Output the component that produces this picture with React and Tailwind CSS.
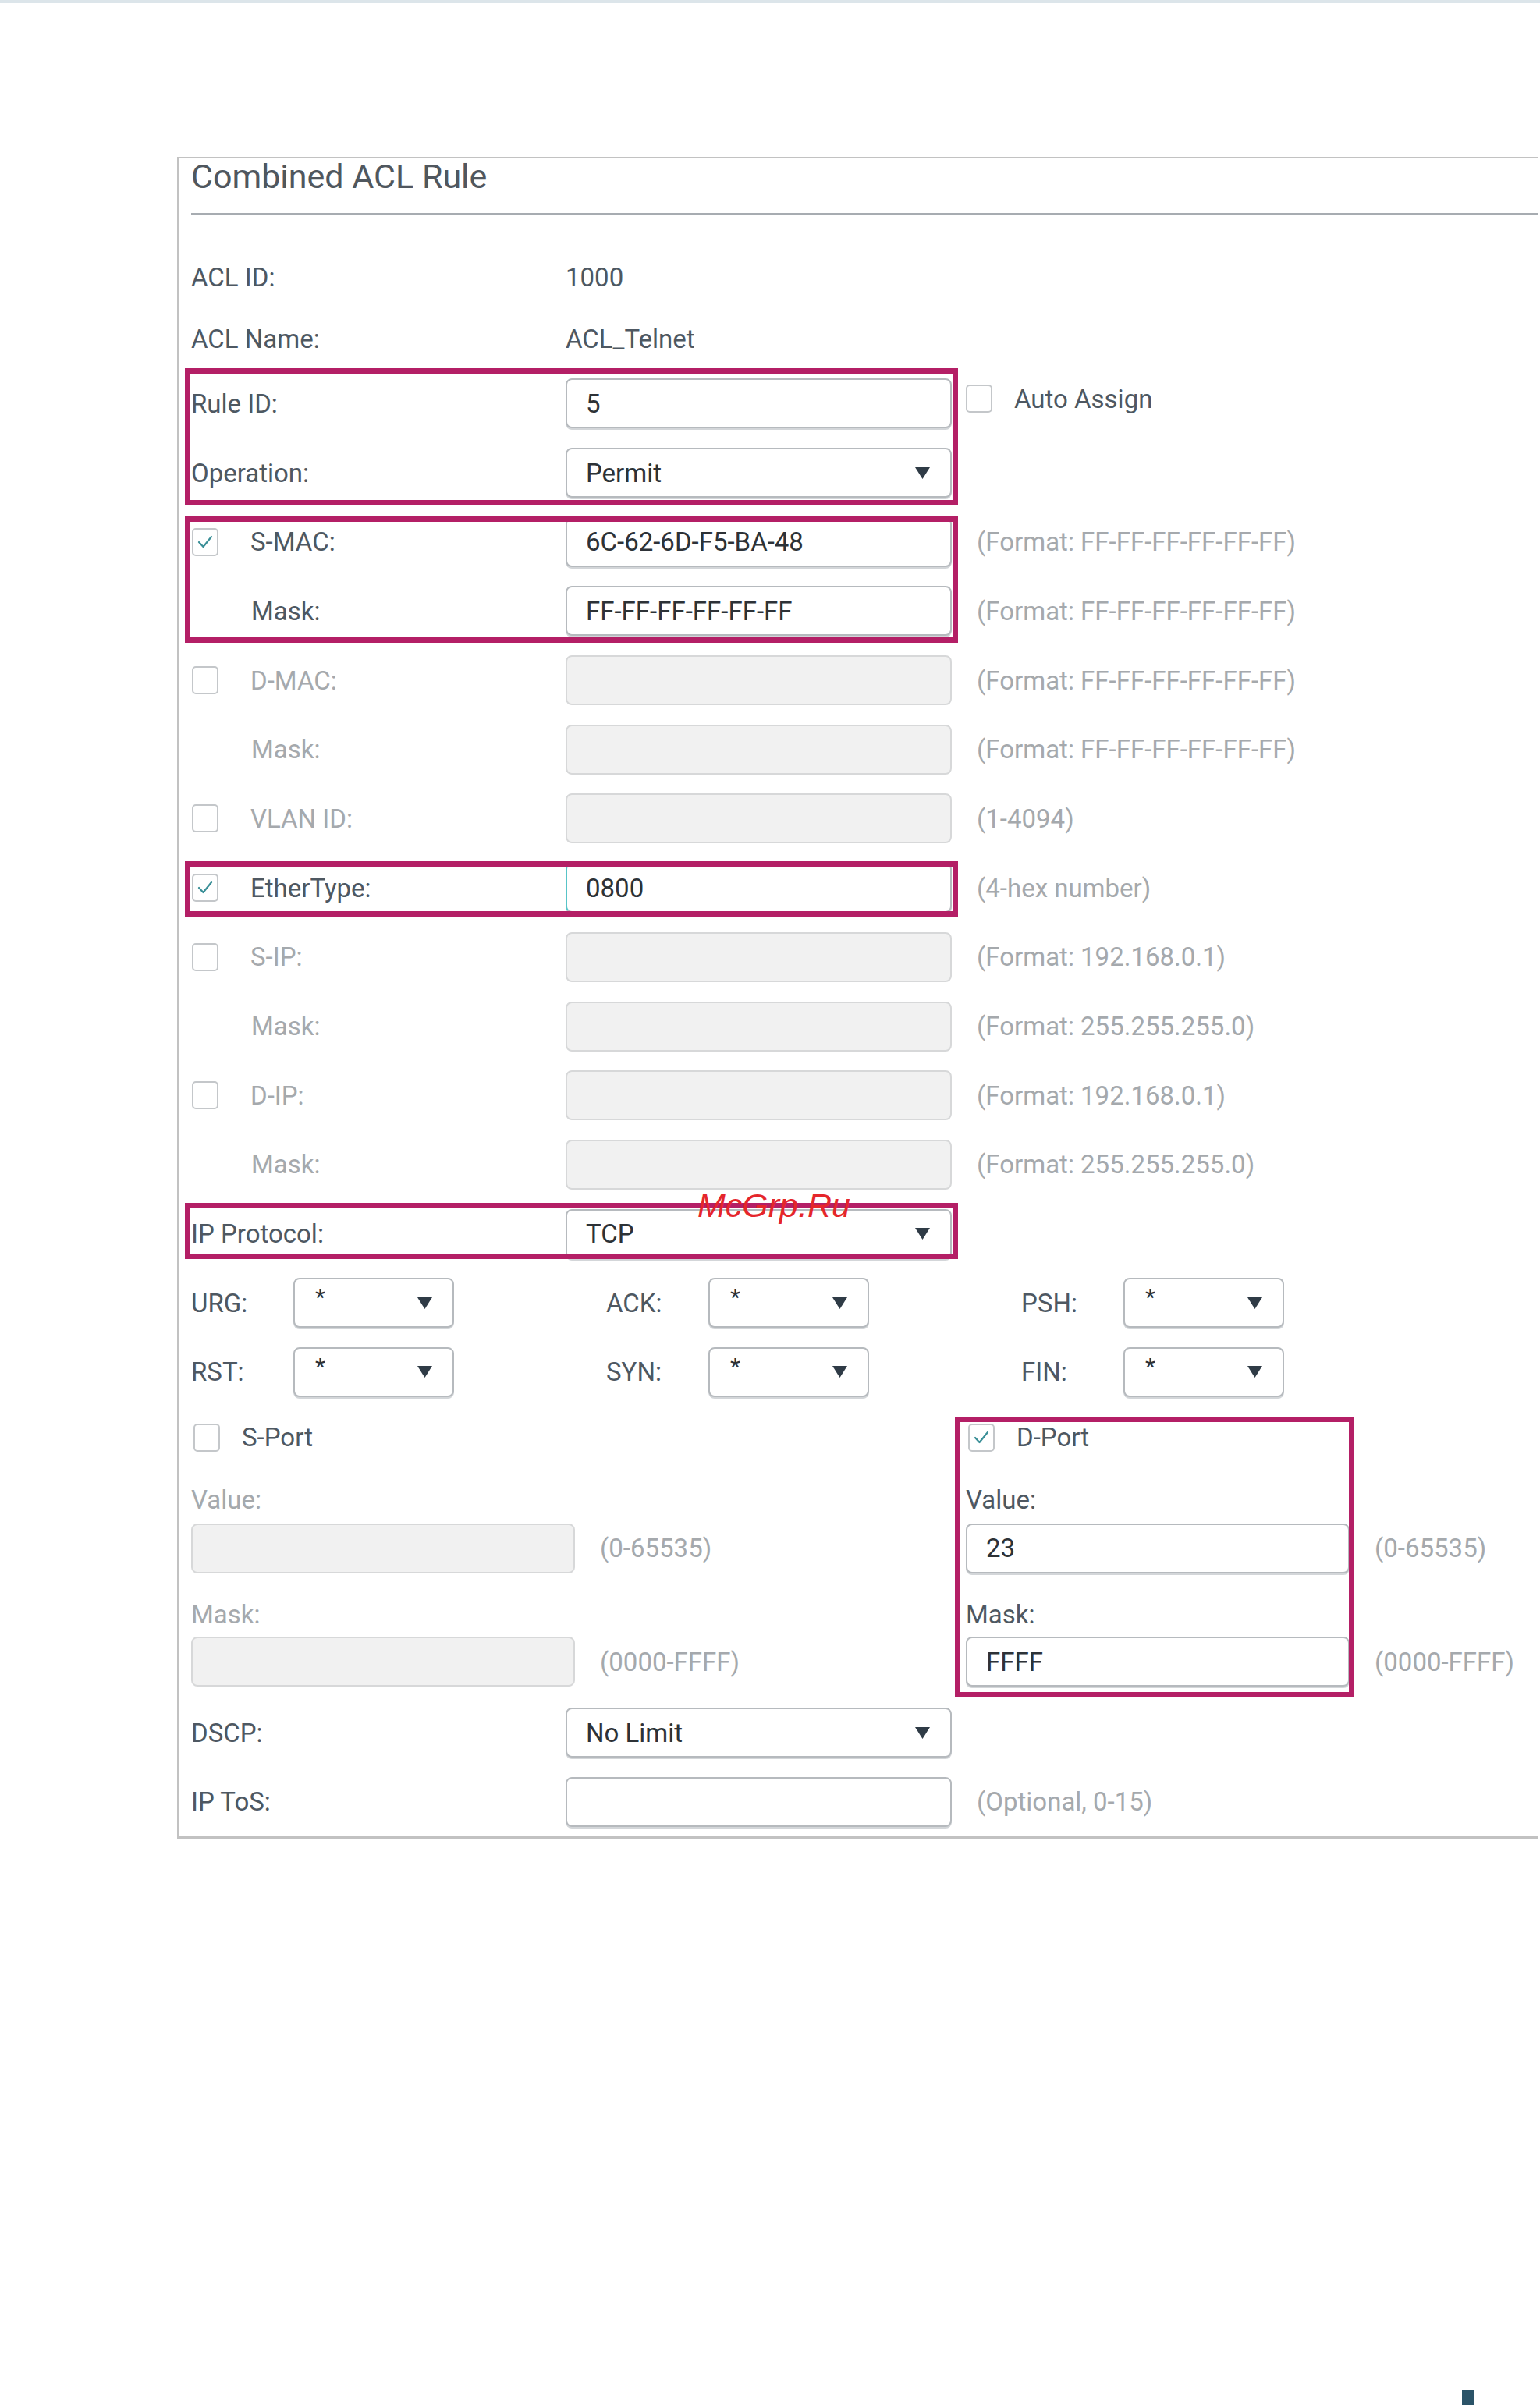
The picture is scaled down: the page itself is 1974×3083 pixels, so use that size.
function Checkbox({ checked }) {
  return (
    <span className="flex h-[36px] w-[34px] shrink-0 items-center justify-center rounded-[5px] border-2 border-[#c4c7ca] bg-white">
      {checked && (
        <svg width="22" height="20" viewBox="0 0 22 20">
          <polyline points="3,10 8.5,16 19,3" fill="none" stroke="#3a8f97" strokeWidth="2.2" strokeLinecap="round" strokeLinejoin="round" />
        </svg>
      )}
    </span>
  );
}

function Arrow() {
  return (
    <svg width="19" height="15" viewBox="0 0 19 15" className="shrink-0">
      <polygon points="0,0 19,0 9.5,15" fill="#2f3b46" />
    </svg>
  );
}

function Field({ value, disabled, select, focus, width = "w-[495px]", small }) {
  const skin = disabled
    ? "border-[#d7d8d9] bg-[#f1f1f1]"
    : "border-[#b6babe] bg-white shadow-[0_2px_0_#d3d6d9]";
  return (
    <div
      className={`flex h-[64px] ${width} shrink-0 items-center justify-between rounded-[8px] border-2 ${small ? "pl-[26px]" : "pl-[24px]"} pr-[26px] ${skin} ${focus ? "border-l-[#58c4c8]" : ""}`}
    >
      <span className={`text-[#2d3237] ${small ? "self-start pt-[8px] text-[30px]" : ""}`}>{value}</span>
      {select && <Arrow />}
    </div>
  );
}

function Hint({ children }) {
  return <span className="ml-[32px] whitespace-nowrap text-[#a5a9ad]">{children}</span>;
}

function Row({ label, check, dim, indent, children, hint, h = "h-[88.7px]" }) {
  const color = dim ? "text-[#a5a9ad]" : "text-[#4e5862]";
  return (
    <div className={`flex ${h} items-center`}>
      <div className="flex w-[480px] shrink-0 items-center">
        {check !== undefined && (
          <span className="ml-[1px]">
            <Checkbox checked={check} />
          </span>
        )}
        <span className={`${check !== undefined ? "ml-[41px]" : ""} ${indent ? "pl-[77px]" : ""} ${color}`}>{label}</span>
      </div>
      {children}
      {hint && <Hint>{hint}</Hint>}
    </div>
  );
}

function Mark({ className }) {
  return <div className={`pointer-events-none absolute z-10 border-[7px] border-[#b41f66] ${className}`} />;
}

function FlagGroup({ label }) {
  return (
    <div className="flex w-[532px] items-center">
      <span className="w-[131px] text-[#4e5862]">{label}</span>
      <Field value="*" select small width="w-[206px]" />
    </div>
  );
}

function PortColumn({ title, checked, value, mask, dim }) {
  const labelColor = dim ? "text-[#a5a9ad]" : "text-[#4e5862]";
  return (
    <div className="flex flex-col">
      <div className="flex h-[79px] items-center">
        <span className="ml-[3px]">
          <Checkbox checked={checked} />
        </span>
        <span className="ml-[28px] text-[#4e5862]">{title}</span>
      </div>
      <div className={`flex h-[70.5px] items-center pt-[9px] ${labelColor}`}>Value:</div>
      <div className="flex items-center">
        <Field value={value} disabled={dim} width="w-[492px]" />
        <Hint>(0-65535)</Hint>
      </div>
      <div className={`flex h-[81.5px] items-center pt-[24px] ${labelColor}`}>Mask:</div>
      <div className="flex items-center">
        <Field value={mask} disabled={dim} width="w-[492px]" />
        <Hint>(0000-FFFF)</Hint>
      </div>
    </div>
  );
}

export default function App() {
  return (
    <div className="relative h-[3083px] w-[1974px] overflow-hidden bg-white font-['Roboto',sans-serif] text-[33px] leading-none">
      <div className="h-[4px] bg-[#dce5ea]" />

      <div className="ml-[227px] mt-[197px] w-[1745px] border-b-[3px] border-l-2 border-r border-t-2 border-[#c2c2c2] pl-[16px]">
        {/* title */}
        <div className="flex h-[47px] items-center text-[43px] text-[#50575e]">Combined ACL Rule</div>
        <div className="mt-[23px] h-[2px] bg-[#a7acb1]" />

        <div className="mt-[40px]">
          <Row label="ACL ID:" h="h-[80px]">
            <span className="text-[#4e5862]">1000</span>
          </Row>
          <Row label="ACL Name:" h="h-[78px]">
            <span className="text-[#4e5862]">ACL_Telnet</span>
          </Row>

          <div className="relative">
            <Mark className="-left-[8px] -top-[1px] h-[176px] w-[991px]" />
            <Row label="Rule ID:">
              <Field value="5" />
              <div className="-mt-[12px] ml-[18px] flex items-center">
                <Checkbox />
                <span className="ml-[28px] text-[#4e5862]">Auto Assign</span>
              </div>
            </Row>
            <Row label="Operation:">
              <Field value="Permit" select />
            </Row>
          </div>

          <div className="relative">
            <Mark className="-left-[8px] top-[11.6px] h-[162px] w-[991px]" />
            <Row label="S-MAC:" check={true} hint="(Format: FF-FF-FF-FF-FF-FF)">
              <Field value="6C-62-6D-F5-BA-48" />
            </Row>
            <Row label="Mask:" indent hint="(Format: FF-FF-FF-FF-FF-FF)">
              <Field value="FF-FF-FF-FF-FF-FF" />
            </Row>
          </div>

          <Row label="D-MAC:" check={false} dim hint="(Format: FF-FF-FF-FF-FF-FF)">
            <Field disabled />
          </Row>
          <Row label="Mask:" indent dim hint="(Format: FF-FF-FF-FF-FF-FF)">
            <Field disabled />
          </Row>
          <Row label="VLAN ID:" check={false} dim hint="(1-4094)">
            <Field disabled />
          </Row>

          <div className="relative">
            <Mark className="-left-[8px] top-[10px] h-[71px] w-[991px]" />
            <Row label="EtherType:" check={true} hint="(4-hex number)">
              <Field value="0800" focus />
            </Row>
          </div>

          <Row label="S-IP:" check={false} dim hint="(Format: 192.168.0.1)">
            <Field disabled />
          </Row>
          <Row label="Mask:" indent dim hint="(Format: 255.255.255.0)">
            <Field disabled />
          </Row>
          <Row label="D-IP:" check={false} dim hint="(Format: 192.168.0.1)">
            <Field disabled />
          </Row>
          <Row label="Mask:" indent dim hint="(Format: 255.255.255.0)">
            <Field disabled />
          </Row>

          <div className="relative">
            <Mark className="-left-[8px] top-[4.6px] h-[72px] w-[991px]" />
            <Row label="IP Protocol:">
              <Field value="TCP" select />
            </Row>
          </div>

          <div className="flex h-[88.7px] items-center">
            <FlagGroup label="URG:" />
            <FlagGroup label="ACK:" />
            <FlagGroup label="PSH:" />
          </div>
          <div className="flex h-[88.7px] items-center">
            <FlagGroup label="RST:" />
            <FlagGroup label="SYN:" />
            <FlagGroup label="FIN:" />
          </div>

          {/* ports */}
          <div className="flex pb-[14.6px]">
            <div className="w-[993px] shrink-0">
              <PortColumn title="S-Port" checked={false} dim />
            </div>
            <div className="relative">
              <Mark className="-left-[14px] top-[12.5px] -bottom-[14px] w-[512px]" />
              <PortColumn title="D-Port" checked={true} value="23" mask="FFFF" />
            </div>
          </div>

          <Row label="DSCP:">
            <Field value="No Limit" select />
          </Row>
          <Row label="IP ToS:" hint="(Optional, 0-15)">
            <Field />
          </Row>
        </div>
      </div>

      <span className="absolute left-[894px] top-[1524px] z-20 font-['Liberation_Sans',sans-serif] text-[43px] italic leading-none text-[#e5262b]">
        McGrp.Ru
      </span>
      <div className="absolute left-[1874px] top-[3064px] h-[19px] w-[15px] bg-[#2b5468]" />
    </div>
  );
}
